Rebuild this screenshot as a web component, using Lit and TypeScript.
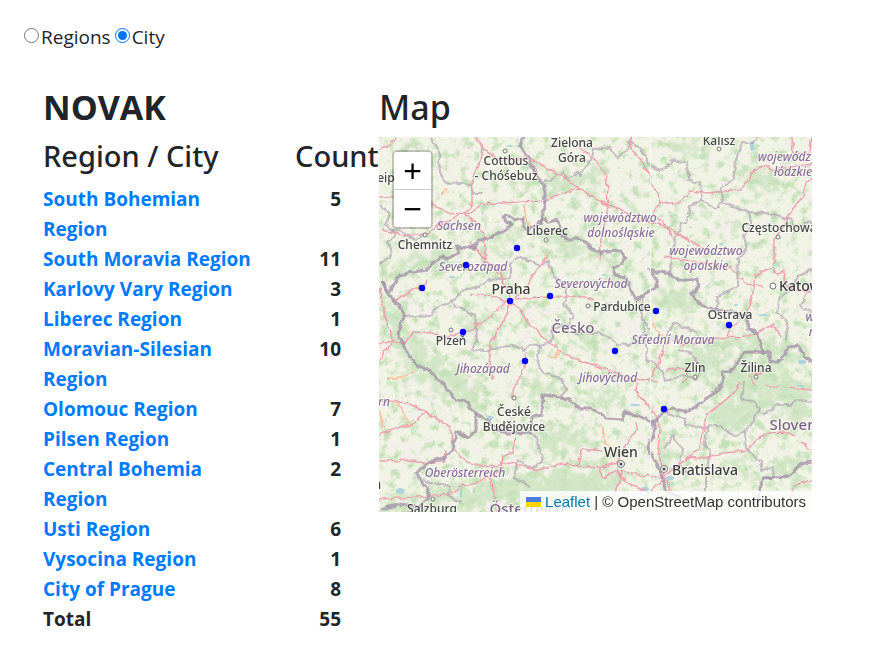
import { LitElement, html, css, svg } from "lit";
import { customElement, state } from "lit/decorators.js";

interface Row {
  name: string;
  count: number;
}

const ROWS: Row[] = [
  { name: "South Bohemian Region", count: 5 },
  { name: "South Moravia Region", count: 11 },
  { name: "Karlovy Vary Region", count: 3 },
  { name: "Liberec Region", count: 1 },
  { name: "Moravian-Silesian Region", count: 10 },
  { name: "Olomouc Region", count: 7 },
  { name: "Pilsen Region", count: 1 },
  { name: "Central Bohemia Region", count: 2 },
  { name: "Usti Region", count: 6 },
  { name: "Vysocina Region", count: 1 },
  { name: "City of Prague", count: 8 },
];

const MARKERS = [
  [517, 248], [466, 265], [422, 288], [510, 301], [550, 296], [656, 311],
  [729, 325], [463, 332], [615, 351], [525, 361], [664, 409],
];

/* Country borders */
const BORDERS = [
  "M523 137L520 146L530 162L537 177L545 185L545 200L542 220L540 223",
  "M381 280L386 288L390 293L393 285L399 275L413 272L426 270L433 262L443 257L448 259L459 253L457 247L473 248L479 240L493 237L504 230L511 225L503 218L504 215L512 217L515 220L523 218L523 227L527 231L540 223L543 218L548 222L557 220L560 227L560 233L566 239L578 239L587 243L592 250L600 251L601 254L607 251L620 250L625 258L623 263L613 268L615 275L625 277L630 288L635 298L639 299L648 292L657 288L657 280L650 270L660 272L670 274L678 280L697 280L699 287L692 293L696 300L705 307L717 310L732 312L747 317L748 328L758 335L763 352L770 353L770 362L782 360L788 348L798 345L805 357L812 362",
  "M763 352L745 352L737 362L733 370L723 372L722 383L718 390L702 402L688 412L672 408L664 412L653 422L655 432L648 447L653 457L663 477L665 490",
  "M653 422L637 415L625 413L623 419L605 418L598 412L590 408L580 408L570 400L560 397L543 395L542 415L532 417L530 433L503 433L490 422L476 413",
  "M381 280L386 292L401 308L404 317L398 332L403 345L416 365L429 370L438 380L446 387L456 400L466 402L476 413L476 430L469 437L456 432L454 447L446 457L429 462L416 473L426 487L429 497L419 507L402 504L380 509",
  "M665 490L690 505L702 511",
  "M757 512L759 493L763 478L790 476L800 464L812 462",
];

/* Administrative limits */
const LIMITS = [
  "M430 137L439 150L439 160L440 172L447 184L463 183L471 186L473 193L482 193",
  "M545 181L553 179L563 173L568 179L579 172L579 176L591 160L594 149L610 147L617 158L627 150L631 137",
  "M631 140L643 152L651 166L660 170L670 165L672 160L687 163L688 180L700 183L702 200L715 209L722 203L720 189L733 180L736 160L742 142L754 143L758 137",
  "M722 203L740 209L748 212L766 213L780 217L792 220L795 227L812 222",
  "M702 200L690 206L687 222L681 224L676 240L671 254L670 274",
  "M750 212L750 226L744 236L747 250L738 260L737 287L718 296L717 308",
  "M380 205L390 212L386 225L396 234L388 242L391 255L379 265",
  "M404 317L430 315L438 307L451 302L455 306L475 315L476 325L477 340L472 350L485 351L512 345L525 350L531 344L540 346",
  "M451 302L464 290L478 287L489 280L510 278L510 264L520 257L540 265L549 262L554 275L565 288L567 300L563 303L573 315L570 324L552 328L552 342L540 346",
  "M540 346L537 363L544 373L561 379L566 390L560 396",
  "M573 333L596 334L600 332L618 344L629 345L644 339L647 350L646 360L653 362L662 370L665 381L682 376L696 379L703 370L690 352L678 350",
  "M644 339L642 300L641 318L650 330",
  "M665 338L674 323L681 326L697 332",
  "M812 270L798 276L792 290L780 296L777 313L788 322L786 340",
  "M812 285L800 305L812 312",
  "M664 412L685 418L685 425L708 428L715 423L729 433L735 436L745 432L755 418L760 410L754 401L742 400L744 380",
  "M745 432L746 450L761 462L761 470L774 467L773 477L763 478",
  "M762 415L772 410L776 405L790 405L800 400L812 402",
  "M708 428L704 445L710 450L706 475L706 492",
  "M530 433L537 438L541 453L543 462L531 468L517 460L514 478L530 486",
  "M424 480L430 483L442 483L450 488L449 496L460 502",
  "M663 450L672 436L682 448L680 466L690 475",
  "M433 230L415 240L400 230L390 232",
];

/* Motorways and trunk roads */
const ROADS = [
  "M379 151L389 145L396 137",
  "M379 197L411 196L432 204L450 214L471 213L482 204L520 202L545 201L570 191L580 189",
  "M471 182L472 193L472 206L464 213L439 225L425 235L403 235L382 230",
  "M463 213L479 225L484 237L486 260L500 270L508 294",
  "M476 137L483 148L481 160L476 172L471 186",
  "M483 148L500 160L530 158L545 167L565 178L580 189L605 204L620 209L635 218L662 225L680 235L710 253",
  "M580 147L595 160L605 173L608 190L606 204L608 210L601 238L600 260",
  "M630 137L630 148L641 160L649 175L652 185L658 194L660 204L680 202L690 191L710 193L740 189L749 180L754 169L765 165L772 170L812 164",
  "M660 204L655 208L654 215L664 224L675 240",
  "M792 137L793 153L808 155L812 137",
  "M812 178L806 183L803 196L790 213L782 229L774 239L774 255L774 272L777 275L785 270L784 283L796 290L812 292",
  "M774 268L765 270L756 276L754 288L750 305L745 315L736 325L731 326L728 337L740 338L752 335L774 325L781 337",
  "M664 257L700 262L730 268L747 284L763 286",
  "M379 344L393 341L403 345L413 332L433 333L443 337L456 334L472 329L489 318L505 303L515 299L530 298L568 296L586 297L594 300",
  "M379 363L384 352L393 341L388 327L383 305L379 288",
  "M510 302L520 310L528 323L549 342L565 355L579 360L608 370L635 381L649 379L658 366L664 345L675 340L681 345L728 337",
  "M510 302L507 315L491 342L489 365L493 380",
  "M510 297L501 276L490 265L480 254L470 246",
  "M505 302L497 297L469 294",
  "M470 242L477 250L488 264",
  "M515 298L526 289L530 278L540 266L549 255",
  "M393 302L413 290L426 284L427 280",
  "M658 381L637 379L636 390L643 400L655 415L660 430L658 450L664 475L670 490L662 512",
  "M379 400L408 403L426 412L450 427L454 450L466 462L489 467L510 463L538 470L562 464L577 466L598 468L617 463L628 440L637 430L637 422",
  "M379 435L400 427L413 425L425 412",
  "M379 461L413 460L424 463L444 461L445 451",
  "M379 499L402 498L432 496L451 494L460 486L473 484L490 476L502 469L503 456L513 453L516 437",
  "M490 476L495 498L497 512",
  "M577 466L583 449L603 451",
  "M598 468L604 478L617 470L622 478L632 485L648 493L663 480",
  "M621 470L620 480L614 495L612 512",
  "M621 470L640 475L662 478L690 457L704 459L723 453L746 451L758 439L769 433L785 432L796 436",
  "M690 456L699 449L704 428L706 415L719 405L732 395L740 383",
  "M514 400L513 390L525 367L526 352",
  "M790 387L800 389L812 390",
  "M766 384L773 388L779 386",
  "M802 442L809 450",
  "M665 370L685 368L688 378L682 383",
  "M762 372L750 376L755 386",
  "M812 480L795 485L790 500",
];

const MINOR = [
  "M398 403L410 425L413 423",
  "M524 205L525 216L532 230",
  "M442 194L448 189",
  "M547 253L545 260L550 268",
  "M652 320L655 330L665 337",
  "M379 410L383 428",
  "M603 427L603 438L609 447",
  "M387 379L402 378L416 370",
  "M548 355L555 358L560 350",
];

/* Wooded uplands: cx, cy, rx, ry, rotation */
const WOODS = [
  [425, 262, 36, 10, -18], [395, 320, 10, 26, -20], [420, 360, 14, 28, -40],
  [460, 388, 34, 13, 42], [560, 184, 26, 9, -12], [590, 180, 16, 10, 0],
  [500, 240, 24, 6, -20], [570, 246, 34, 8, 16], [618, 270, 14, 10, 50],
  [675, 300, 22, 14, 0], [700, 360, 40, 12, -30], [750, 380, 40, 16, 0],
  [770, 350, 36, 12, 10], [740, 412, 32, 16, -30], [795, 400, 18, 24, 0],
  [560, 440, 30, 12, -10], [570, 486, 54, 17, -8], [470, 496, 50, 12, 0],
  [510, 490, 30, 16, 0], [600, 395, 28, 6, 0], [590, 340, 20, 8, 20],
  [545, 390, 20, 10, 0], [785, 470, 24, 10, -15], [410, 155, 16, 6, 0],
  [665, 456, 6, 16, 0], [760, 180, 28, 8, 30], [480, 320, 20, 8, 0],
  [690, 150, 20, 6, 0], [398, 505, 20, 7, 0], [736, 466, 14, 7, 0],
];

const LAKES = [
  [752, 146, 2, 5], [510, 146, 3, 1], [452, 277, 3, 1], [604, 275, 2, 1],
  [763, 315, 4, 1], [736, 305, 2, 1], [400, 491, 4, 3], [461, 493, 1, 5],
  [474, 491, 1, 3], [635, 405, 5, 1], [721, 244, 2, 1], [802, 362, 4, 2],
  [645, 489, 4, 2], [800, 386, 4, 1], [490, 418, 3, 2], [670, 478, 4, 2],
];

type Label = [string, number, number, string];

const LABELS: Label[] = [
  ["Zielona", 572, 147, "town"], ["Góra", 572, 162, "town"],
  ["Cottbus", 506, 165, "town"], ["- Chóśebuz", 506, 180, "town"],
  ["Kalisz", 719, 145, "town"], ["eip", 386, 182, "town"],
  ["Liberec", 547, 235, "town"], ["Chemnitz", 425, 249, "town"],
  ["Częstochowa", 779, 232, "town"], ["Katow", 800, 291, "city"],
  ["Praha", 511, 294, "city"], ["Pardubice", 622, 311, "town"],
  ["Ostrava", 730, 319, "town"], ["Plzeň", 451, 345, "town"],
  ["Zlín", 695, 372, "town"], ["Žilina", 756, 372, "town"],
  ["České", 514, 416, "town"], ["Budějovice", 514, 431, "town"],
  ["Wien", 621, 457, "city"], ["Bratislava", 705, 475, "city"],
  ["Salzburg", 432, 513, "town"], ["n", 377, 489, "city"],
  ["Česko", 573, 333, "country"], ["Sloven", 793, 430, "country"],
  ["Österreich", 527, 514, "country"],
  ["Sachsen", 459, 230, "area"], ["województwo", 620, 222, "area"],
  ["dolnośląskie", 621, 237, "area"], ["województw", 791, 161, "area"],
  ["łódzkie", 793, 176, "area"], ["województwo", 706, 255, "area"],
  ["opolskie", 706, 270, "area"], ["Severozápad", 473, 271, "area"],
  ["Severovýchod", 591, 288, "area"], ["Střední Morava", 673, 344, "area"],
  ["Jihozápad", 483, 373, "area"], ["Jihovýchod", 608, 382, "area"],
  ["Oberösterreich", 465, 477, "area"], ["rn", 384, 406, "area"],
  ["w", 810, 321, "area"], ["m", 814, 336, "area"],
];

const TOWNS = [
  [505, 151], [719, 149], [546, 240], [425, 235], [778, 237], [588, 306],
  [451, 330], [695, 377], [756, 377], [514, 398], [433, 499],
];

@customElement("app-root")
export class AppRoot extends LitElement {
  @state() private mode: "regions" | "city" = "city";

  static styles = css`
    :host {
      display: block;
      color: #212529;
      font-family: "Segoe UI", "Open Sans", "Noto Sans", sans-serif;
      font-size: 19px;
      line-height: 30px;
    }
    .switch {
      display: flex;
      gap: 4px;
      padding: 22px 24px 0;
    }
    .choice {
      display: flex;
      align-items: center;
      gap: 2px;
    }
    .choice input {
      width: 15px;
      height: 15px;
      margin: 0 0 3px;
    }
    .columns {
      display: grid;
      grid-template-columns: 336px minmax(0, 1fr);
      padding: 35px 59px 28px 43px;
    }
    .title {
      margin: 0 0 9px;
      font-family: "Segoe UI", "Noto Sans", sans-serif;
      font-size: 34px;
      line-height: 41px;
      font-weight: 500;
    }
    .strong {
      font-family: "Segoe UI", "Open Sans", sans-serif;
      font-weight: 700;
    }
    .counts {
      width: 334px;
      border-collapse: collapse;
      table-layout: fixed;
    }
    .name-col {
      width: 252px;
    }
    .counts th,
    .counts td {
      padding: 0 36px 0 0;
      text-align: left;
      vertical-align: top;
      font-weight: 700;
      font-size: 19px;
    }
    .counts thead th {
      padding: 0 0 9px;
      font-family: "Segoe UI", "Noto Sans", sans-serif;
      font-size: 29px;
      line-height: 38px;
      font-weight: 500;
      white-space: nowrap;
    }
    .counts td {
      text-align: right;
    }
    .counts a {
      color: #007bff;
      text-decoration: none;
    }
    .map {
      position: relative;
      height: 375px;
      overflow: hidden;
      background: #ddd;
    }
    .tiles {
      display: block;
      width: 100%;
      height: 100%;
    }
    .zoom {
      position: absolute;
      top: 13px;
      left: 13px;
      display: flex;
      flex-direction: column;
      border: 2px solid rgba(0, 0, 0, 0.2);
      border-radius: 5px;
      background-clip: padding-box;
    }
    .zoom button {
      width: 37px;
      height: 37px;
      padding: 0;
      border: 0;
      background: #fff;
      color: #000;
      font: 32px/36px "Liberation Sans", Arial, sans-serif;
      border-radius: 0 0 3px 3px;
    }
    .zoom button:first-child {
      height: 38px;
      border-bottom: 1px solid #ccc;
      border-radius: 3px 3px 0 0;
    }
    .credit {
      position: absolute;
      right: 0;
      bottom: 0;
      padding: 0 6px;
      background: rgba(255, 255, 255, 0.8);
      color: #333;
      font: 15px/21px "Liberation Sans", Arial, sans-serif;
      white-space: nowrap;
    }
    .credit a {
      color: #0078a8;
      text-decoration: none;
    }
    .flag {
      width: 15px;
      height: 10px;
    }
    .border {
      fill: none;
      stroke: #a08da6;
      stroke-width: 3;
      stroke-linejoin: round;
      opacity: 0.75;
    }
    .limit {
      fill: none;
      stroke: #a998ae;
      stroke-width: 2;
      stroke-linejoin: round;
      opacity: 0.6;
    }
    .road {
      fill: none;
      stroke: #ee9fae;
      stroke-width: 1.6;
      stroke-linejoin: round;
      opacity: 0.9;
    }
    .minor {
      fill: none;
      stroke: #fac8a8;
      stroke-width: 2;
    }
    .wood {
      fill: #c9e2bd;
    }
    .lake {
      fill: #aad3df;
    }
    .label {
      font-family: "Noto Sans", sans-serif;
      font-weight: 500;
      text-anchor: middle;
      paint-order: stroke;
      stroke: rgba(255, 255, 255, 0.6);
      stroke-width: 2px;
    }
    .town {
      font-size: 12px;
      fill: #444;
    }
    .city {
      font-size: 14px;
      fill: #3a3a3a;
    }
    .country {
      font-size: 15px;
      fill: #7c6484;
    }
    .area {
      font-size: 12px;
      font-style: italic;
      fill: #8b6f97;
    }
    .dot {
      fill: #fff;
      stroke: #777;
    }
    .marker {
      fill: #0000ff;
    }
  `;

  private tiles() {
    return html`
      <svg
        class="tiles"
        viewBox="379 137 433 375"
        preserveAspectRatio="xMidYMid slice"
        role="img"
        aria-label="Map of Czechia"
      >
        <defs>
          <filter id="forest" x="0" y="0" width="100%" height="100%" color-interpolation-filters="sRGB">
            <feTurbulence type="fractalNoise" baseFrequency="0.1" numOctaves="4" seed="8" />
            <feColorMatrix values="0 0 0 0 0.77  0 0 0 0 0.88  0 0 0 0 0.72  4 0 0 0 -2.05" />
          </filter>
          <filter id="fields" x="0" y="0" width="100%" height="100%" color-interpolation-filters="sRGB">
            <feTurbulence type="fractalNoise" baseFrequency="0.05" numOctaves="4" seed="3" />
            <feColorMatrix values="0 0 0 0 0.95  0 0 0 0 0.94  0 0 0 0 0.91  0 3 0 0 -1.2" />
          </filter>
          <filter id="ragged" x="-10%" y="-10%" width="120%" height="120%" color-interpolation-filters="sRGB">
            <feTurbulence type="fractalNoise" baseFrequency="0.12" numOctaves="3" seed="5" result="n" />
            <feDisplacementMap in="SourceGraphic" in2="n" scale="50" xChannelSelector="R" yChannelSelector="G" />
            <feGaussianBlur stdDeviation="1" />
          </filter>
          <filter id="wobble" x="-5%" y="-5%" width="110%" height="110%" color-interpolation-filters="sRGB">
            <feTurbulence type="fractalNoise" baseFrequency="0.15" numOctaves="2" seed="2" result="n" />
            <feDisplacementMap in="SourceGraphic" in2="n" scale="5" xChannelSelector="R" yChannelSelector="G" />
          </filter>
        </defs>
        <rect x="379" y="137" width="433" height="375" fill="#f1f4e4" />
        <rect x="379" y="137" width="433" height="375" filter="url(#fields)" />
        <g filter="url(#ragged)" opacity="0.75">
          ${WOODS.map(
            ([x, y, rx, ry, a]) =>
              svg`<ellipse class="wood" cx=${x} cy=${y} rx=${rx} ry=${ry} transform="rotate(${a} ${x} ${y})" />`
          )}
        </g>
        <rect x="379" y="137" width="433" height="375" filter="url(#forest)" />
        ${LAKES.map(([x, y, rx, ry]) => svg`<ellipse class="lake" cx=${x} cy=${y} rx=${rx} ry=${ry} />`)}
        <g filter="url(#wobble)">
          ${MINOR.map((d) => svg`<path class="minor" d=${d} />`)}
          ${LIMITS.map((d) => svg`<path class="limit" d=${d} />`)}
          ${ROADS.map((d) => svg`<path class="road" d=${d} />`)}
          ${BORDERS.map((d) => svg`<path class="border" d=${d} />`)}
        </g>
        <path d="M650.5 137V512" stroke="#fff" opacity="0.8" />
        ${TOWNS.map(([x, y]) => svg`<circle class="dot" cx=${x} cy=${y} r="2" />`)}
        <circle class="dot" cx="773" cy="286" r="3" />
        ${[[621, 464], [664, 469]].map(
          ([x, y]) => svg`<circle class="dot" cx=${x} cy=${y} r="3.5" /><circle cx=${x} cy=${y} r="1.5" fill="#444" />`
        )}
        ${LABELS.map(([t, x, y, kind]) => svg`<text class="label ${kind}" x=${x} y=${y}>${t}</text>`)}
        ${MARKERS.map(([x, y]) => svg`<circle class="marker" cx=${x} cy=${y} r="3.2" />`)}
      </svg>
    `;
  }

  render() {
    const total = ROWS.reduce((sum, row) => sum + row.count, 0);
    return html`
      <div class="switch">
        <label class="choice">
          <input
            type="radio"
            name="mode"
            .checked=${this.mode === "regions"}
            @change=${() => (this.mode = "regions")}
          />Regions
        </label>
        <label class="choice">
          <input
            type="radio"
            name="mode"
            .checked=${this.mode === "city"}
            @change=${() => (this.mode = "city")}
          />City
        </label>
      </div>
      <main class="columns">
        <section>
          <h1 class="title strong">NOVAK</h1>
          <table class="counts">
            <colgroup>
              <col class="name-col" />
              <col />
            </colgroup>
            <thead>
              <tr>
                <th scope="col">Region / City</th>
                <th scope="col">Count</th>
              </tr>
            </thead>
            <tbody>
              ${ROWS.map(
                (row) => html`<tr>
                  <th scope="row"><a href="#">${row.name}</a></th>
                  <td>${row.count}</td>
                </tr>`
              )}
              <tr>
                <th scope="row">Total</th>
                <td>${total}</td>
              </tr>
            </tbody>
          </table>
        </section>
        <section>
          <h2 class="title">Map</h2>
          <div class="map">
            ${this.tiles()}
            <div class="zoom">
              <button type="button" aria-label="Zoom in">+</button>
              <button type="button" aria-label="Zoom out">−</button>
            </div>
            <div class="credit">
              <a href="#"
                ><svg class="flag" viewBox="0 0 15 10" aria-hidden="true">
                  <path fill="#4c7be1" d="M0 0h15v5H0z" />
                  <path fill="#ffd500" d="M0 5h15v5H0z" />
                </svg>
                Leaflet</a
              >
              | © OpenStreetMap contributors
            </div>
          </div>
        </section>
      </main>
    `;
  }
}
